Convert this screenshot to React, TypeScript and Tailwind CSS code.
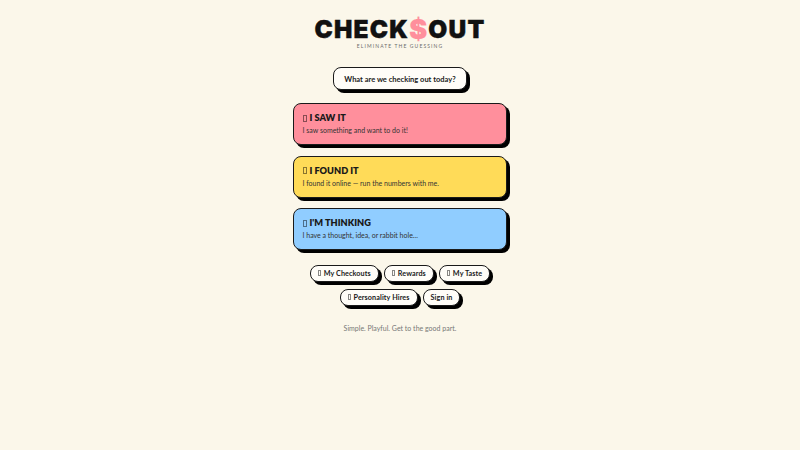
import React from "react";

const cards = [
  { title: "I SAW IT", text: "I saw something and want to do it!", bg: "bg-[#ff8f9c]" },
  { title: "I FOUND IT", text: "I found it online — run the numbers with me.", bg: "bg-[#ffdb58]" },
  { title: "I'M THINKING", text: "I have a thought, idea, or rabbit hole...", bg: "bg-[#90cdff]" },
];

// emoji didn't load in the original, so it shows a missing-glyph box
function Tofu({ big }: { big?: boolean }) {
  return (
    <span
      className={
        big
          ? "mr-[3px] inline-block h-[7px] w-[4px] border-[0.75px] border-[#00000077] align-[-0.5px]"
          : "mr-[3px] inline-block h-[6px] w-[3px] border-[0.75px] border-[#00000077] align-[-0.5px]"
      }
    />
  );
}

function Pill({ icon, label }: { icon?: boolean; label: string }) {
  return (
    <button className="box-content h-[15px] rounded-[8px] border-[1.5px] border-[#1a1a1a] bg-[#fffdf8] px-[7px] text-[7.2px] leading-[15px] font-bold tracking-[0.1px] text-[#1a1a1a] shadow-[3px_3px_0_#000]">
      {icon && <Tofu />}
      {label}
    </button>
  );
}

export default function App() {
  return (
    <div className="flex min-h-[450px] flex-col items-center bg-[#fbf7ea] pt-[17px] font-['Lato','Noto_Sans',sans-serif] text-[#1a1a1a]">
      <h1 className="flex h-[24px] items-center font-['Inter',sans-serif] text-[24.5px] leading-none font-black tracking-[1.2px] text-[#111] [-webkit-text-stroke:0.4px_#111]">
        CHECK<span className="text-[27px] text-[#ff8f9c] [-webkit-text-stroke:0.2px_#ff8f9c]">$</span>OUT
      </h1>
      <p className="mt-[2px] text-[5px] leading-[7px] tracking-[1.1px] text-[#6b6b6b]">ELIMINATE THE GUESSING</p>

      <button className="mt-[17px] box-content h-[20px] rounded-[8px] border-[1.5px] border-[#1a1a1a] bg-[#fffdf8] px-[10.5px] pt-[1px] text-[7.5px] leading-[19px] font-bold shadow-[3px_3px_0_#000]">
        What are we checking out today?
      </button>

      <div className="mt-[13px] flex w-[214px] flex-col gap-[10.5px]">
        {cards.map((c) => (
          <div
            key={c.title}
            className={`h-[42px] rounded-[8px] border-[1.5px] border-[#1a1a1a] ${c.bg} px-[8.5px] pt-[7px] shadow-[3px_3px_0_#000]`}
          >
            <div className="text-[9.2px] leading-[14px] font-extrabold">
              <Tofu big />
              {c.title}
            </div>
            <div className="text-[7px] leading-[11px] text-[#333]">{c.text}</div>
          </div>
        ))}
      </div>

      <div className="mt-[14.5px] flex w-[200px] flex-wrap justify-center gap-x-[5px] gap-y-[7px]">
        <Pill icon label="My Checkouts" />
        <Pill icon label="Rewards" />
        <Pill icon label="My Taste" />
        <Pill icon label="Personality Hires" />
        <Pill label="Sign in" />
      </div>

      <p className="mt-[17px] text-[7px] leading-[10px] text-[#777]">Simple. Playful. Get to the good part.</p>
    </div>
  );
}
